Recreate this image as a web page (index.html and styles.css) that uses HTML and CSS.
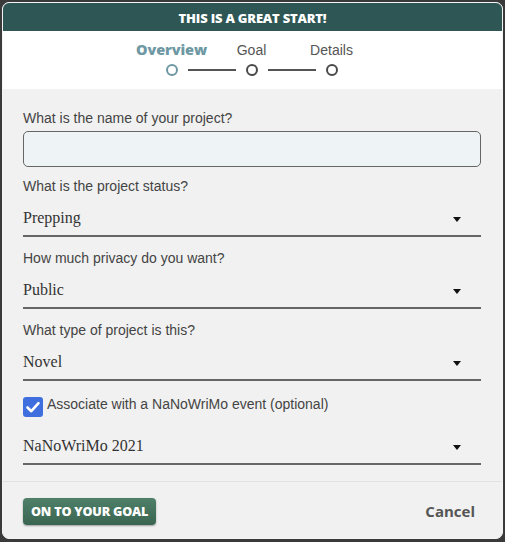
FILE: index.html
```html
<!DOCTYPE html>
<html>
<head>
<meta charset="utf-8">
<link rel="stylesheet" href="styles.css">
</head>
<body>
<div class="modal">
  <div class="modal-header">THIS IS A GREAT START!</div>
  <div class="stepper">
    <div class="step-labels">
      <span class="step-label active">Overview</span>
      <span class="step-label">Goal</span>
      <span class="step-label">Details</span>
    </div>
    <div class="step-dots">
      <span class="dot active"></span>
      <span class="connector"></span>
      <span class="dot"></span>
      <span class="connector"></span>
      <span class="dot"></span>
    </div>
  </div>
  <div class="modal-body">
    <label class="field-label">What is the name of your project?</label>
    <div class="text-input"></div>

    <label class="field-label">What is the project status?</label>
    <div class="select"><span>Prepping</span><span class="caret"></span></div>

    <label class="field-label">How much privacy do you want?</label>
    <div class="select"><span>Public</span><span class="caret"></span></div>

    <label class="field-label">What type of project is this?</label>
    <div class="select"><span>Novel</span><span class="caret"></span></div>

    <div class="check-row">
      <span class="checkbox">
        <svg width="20" height="20" viewBox="0 0 20 20"><path d="M4.5 10.5 L8.3 14.2 L15.5 6.2" fill="none" stroke="#fff" stroke-width="2.6" stroke-linecap="round" stroke-linejoin="round"/></svg>
      </span>
      <span class="check-text">Associate with a NaNoWriMo event (optional)</span>
    </div>
    <div class="select event"><span>NaNoWriMo 2021</span><span class="caret"></span></div>
  </div>
  <div class="modal-footer">
    <button class="btn-primary">ON TO YOUR GOAL</button>
    <button class="btn-cancel">Cancel</button>
  </div>
</div>
</body>
</html>
```
FILE: styles.css
```css
html, body {
  margin: 0;
  padding: 0;
}
body {
  background: #3a3a3a;
  width: 505px;
  height: 542px;
  overflow: hidden;
  font-family: "Liberation Sans", Arial, sans-serif;
}
.modal {
  margin: 2px 0 0 2px;
  width: 499px;
  height: 535px;
  border: 1px solid #f4f4f4;
  border-radius: 7px;
  background: #f1f1f1;
  overflow: hidden;
  display: flex;
  flex-direction: column;
}
.modal-header {
  height: 28px;
  background: #2e5654;
  color: #fff;
  font-family: "Open Sans", sans-serif;
  font-weight: 800;
  font-size: 13px;
  letter-spacing: -0.2px;
  display: flex;
  align-items: center;
  justify-content: center;
  padding-top: 1px;
  box-sizing: border-box;
}
.stepper {
  background: #fff;
  height: 58px;
  display: flex;
  flex-direction: column;
  align-items: center;
  padding: 11px 2px 0 0;
  box-sizing: border-box;
}
.step-labels {
  display: flex;
  width: 240px;
}
.step-label {
  width: 80px;
  text-align: center;
  font-size: 14px;
  line-height: 16px;
  color: #555;
}
.step-label.active {
  font-family: "Open Sans", sans-serif;
  font-weight: 800;
  font-size: 14.5px;
  color: #6e98a3;
  letter-spacing: -0.1px;
}
.step-dots {
  display: flex;
  align-items: center;
  gap: 10px;
  margin-top: 6px;
}
.dot {
  width: 12px;
  height: 12px;
  box-sizing: border-box;
  border: 2px solid #4a4a4a;
  border-radius: 50%;
}
.dot.active {
  border-color: #6e98a3;
}
.connector {
  width: 48px;
  height: 2px;
  background: #555;
}
.modal-body {
  flex: 1;
  padding: 21px 21px 0 20px;
  display: flex;
  flex-direction: column;
  border-bottom: 1px solid #e2e2e2;
}
.field-label {
  display: block;
  font-size: 14px;
  line-height: 16px;
  color: #444;
}
.text-input {
  margin-top: 5px;
  height: 36px;
  box-sizing: border-box;
  border: 1px solid #666;
  border-radius: 5px;
  background: #eef3f6;
  margin-bottom: 11px;
}
.select {
  display: flex;
  align-items: center;
  justify-content: space-between;
  padding: 14px 20px 7px 0;
  line-height: 20px;
  font-family: "Liberation Serif", "Times New Roman", serif;
  font-size: 16px;
  color: #333;
  border-bottom: 2px solid #666;
  margin-bottom: 13px;
}
.caret {
  width: 0;
  height: 0;
  border-left: 4.5px solid transparent;
  border-right: 4.5px solid transparent;
  border-top: 5px solid #111;
  margin-top: 2px;
}
.check-row {
  display: flex;
  align-items: flex-start;
  gap: 4px;
  margin-top: 3px;
  height: 20px;
}
.checkbox {
  width: 20px;
  height: 20px;
  border-radius: 3px;
  background: #3f6fdf;
  display: flex;
}
.check-text {
  font-size: 14px;
  line-height: 14px;
  color: #444;
}
.select.event {
  margin-top: 5px;
  margin-bottom: 0;
}
.modal-footer {
  height: 56px;
  display: flex;
  align-items: center;
  justify-content: space-between;
  padding: 0 27px 0 20px;
  box-sizing: border-box;
}
.btn-primary {
  height: 27px;
  padding: 0 8px;
  border: none;
  border-radius: 4px;
  background: linear-gradient(#4f8068, #3a6552);
  box-shadow: 0 1px 2px rgba(0,0,0,0.35);
  color: #fff;
  font-family: "Open Sans", sans-serif;
  font-weight: 800;
  font-size: 12.6px;
  letter-spacing: -0.2px;
  margin-top: 2px;
}
.btn-cancel {
  border: none;
  background: none;
  padding: 0;
  font-family: "Open Sans", sans-serif;
  font-weight: 700;
  font-size: 15px;
  color: #555;
  margin-top: 2px;
}
```
